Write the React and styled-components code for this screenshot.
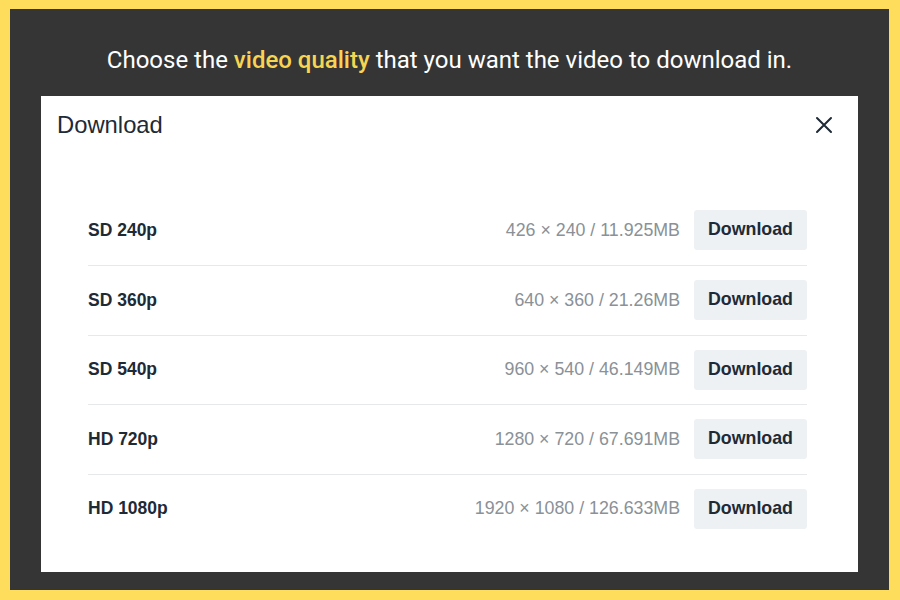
import React from "react";
import styled, { createGlobalStyle } from "styled-components";

const Global = createGlobalStyle`
  html, body { margin: 0; padding: 0; }
  body { font-family: "Liberation Sans", Arial, sans-serif; }
`;

const Frame = styled.div`
  width: 900px;
  height: 600px;
  box-sizing: border-box;
  background: #ffdd5c;
  padding: 9px 11px 10px 10px;
`;

const Stage = styled.div`
  height: 100%;
  box-sizing: border-box;
  background: #353535;
  display: flex;
  flex-direction: column;
  padding: 0 31px 18px 31px;
`;

const Headline = styled.h1`
  margin: 0;
  height: 87px;
  display: flex;
  align-items: center;
  justify-content: center;
  padding-top: 14px;
  box-sizing: border-box;
  font-family: Roboto, "Liberation Sans", sans-serif;
  font-weight: 400;
  font-size: 24px;
  color: #ffffff;
  white-space: pre;
`;

const Accent = styled.span`
  color: #f7d552;
  font-weight: 500;
`;

const Modal = styled.div`
  flex: 1;
  background: #ffffff;
  display: flex;
  flex-direction: column;
`;

const Header = styled.div`
  display: flex;
  align-items: center;
  justify-content: space-between;
  padding: 14px 24px 0 16px;
  height: 30px;
`;

const Title = styled.h2`
  margin: 0;
  font-size: 23.8px;
  font-weight: 400;
  color: #1e2a36;
`;

const Close = styled.button`
  border: none;
  background: none;
  padding: 0;
  width: 20px;
  height: 20px;
  display: flex;
  align-items: center;
  justify-content: center;
  cursor: pointer;
`;

const List = styled.div`
  padding: 55.5px 51px 0 47px;
  display: flex;
  flex-direction: column;
`;

const Row = styled.div`
  display: flex;
  align-items: center;
  height: 69.5px;
  box-sizing: border-box;
  border-top: ${(p) => (p.$first ? "none" : "1px solid #e6e8ea")};
`;

const Quality = styled.div`
  flex: 1;
  font-size: 17.5px;
  font-weight: 700;
  color: #1e2a36;
`;

const Meta = styled.div`
  font-size: 17.8px;
  color: #8a9197;
  margin-right: 14px;
`;

const Button = styled.button`
  width: 113px;
  height: 40px;
  border: none;
  border-radius: 3px;
  background: #eef1f3;
  font-family: "Liberation Sans", Arial, sans-serif;
  font-size: 17.8px;
  font-weight: 700;
  color: #1e2a36;
  cursor: pointer;
  padding: 0 0 1px 0;
`;

const rows = [
  ["SD 240p", "426 × 240 / 11.925MB"],
  ["SD 360p", "640 × 360 / 21.26MB"],
  ["SD 540p", "960 × 540 / 46.149MB"],
  ["HD 720p", "1280 × 720 / 67.691MB"],
  ["HD 1080p", "1920 × 1080 / 126.633MB"],
];

export default function App() {
  return (
    <>
      <Global />
      <Frame>
        <Stage>
          <Headline>
            Choose the <Accent>video quality</Accent> that you want the video to download in.
          </Headline>
          <Modal>
            <Header>
              <Title>Download</Title>
              <Close aria-label="Close">
                <svg width="18" height="18" viewBox="0 0 18 18">
                  <path d="M2 2 L16 16 M16 2 L2 16" stroke="#1e2a36" strokeWidth="2" strokeLinecap="round" />
                </svg>
              </Close>
            </Header>
            <List>
              {rows.map(([q, m], i) => (
                <Row key={q} $first={i === 0}>
                  <Quality>{q}</Quality>
                  <Meta>{m}</Meta>
                  <Button>Download</Button>
                </Row>
              ))}
            </List>
          </Modal>
        </Stage>
      </Frame>
    </>
  );
}
